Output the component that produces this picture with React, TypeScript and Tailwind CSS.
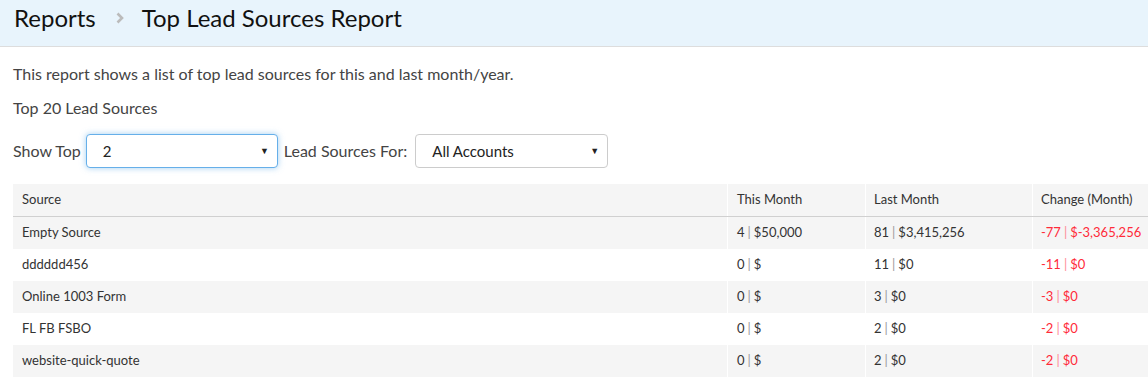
import React from "react";

const rows = [
  { s: "Empty Source", t: "4 | $50,000", l: "81 | $3,415,256", c: "-77 | $-3,365,256" },
  { s: "dddddd456", t: "0 | $", l: "11 | $0", c: "-11 | $0" },
  { s: "Online 1003 Form", t: "0 | $", l: "3 | $0", c: "-3 | $0" },
  { s: "FL FB FSBO", t: "0 | $", l: "2 | $0", c: "-2 | $0" },
  { s: "website-quick-quote", t: "0 | $", l: "2 | $0", c: "-2 | $0" },
];

function Pipe({ v, red }: { v: string; red?: boolean }) {
  const [a, b] = v.split(" | ");
  return (
    <span className={red ? "text-[#ff2b3a]" : "text-[#333]"}>
      {a}
      <span className={red ? "mx-[3px] text-[#ff8a94]" : "mx-[3px] text-[#999]"}>|</span>
      {b}
    </span>
  );
}

function Select({ value, width, focused }: { value: string; width: string; focused?: boolean }) {
  return (
    <div
      className={`${width} h-[34px] shrink-0 flex items-center justify-between rounded-[4px] bg-white pl-[16px] pr-[8px] text-[15px] text-[#222] ${
        focused
          ? "border border-[#66afe9] shadow-[0_0_6px_rgba(102,175,233,0.6)]"
          : "border border-[#ccc]"
      }`}
    >
      <span>{value}</span>
      <span className="text-[9px] text-[#222]">▼</span>
    </div>
  );
}

function Row({
  cells,
  bg,
  header,
}: {
  cells: React.ReactNode[];
  bg: string;
  header?: boolean;
}) {
  return (
    <div className={`flex ${header ? "h-[33px] border-b border-[#d0d0d0]" : "h-[32px]"} ${bg}`}>
      <div className="w-[714px] shrink-0 pl-[9px] flex items-center">{cells[0]}</div>
      <div className="w-[138px] shrink-0 pl-[9px] flex items-center border-l border-white">{cells[1]}</div>
      <div className="w-[167px] shrink-0 pl-[8px] flex items-center border-l border-white">{cells[2]}</div>
      <div className="w-[200px] shrink-0 pl-[8px] flex items-center border-l border-white">{cells[3]}</div>
    </div>
  );
}

export default function App() {
  return (
    <div className="w-[1148px] h-[379px] overflow-hidden bg-white font-['Lato',sans-serif] text-[#333]">
      <div className="h-[47px] bg-[#e8f4fc] border-b border-[#ddd] flex items-start pt-[2px] pl-[14px]">
        <span className="text-[24px] leading-[32px] text-[#111]">Reports</span>
        <span className="ml-[20px] mr-[18px] h-[32px] flex items-center">
          <svg width="8" height="12" viewBox="0 0 8 12">
            <path d="M1.5 1.5 L6 6 L1.5 10.5" fill="none" stroke="#bbbbbb" strokeWidth="2.6" />
          </svg>
        </span>
        <span className="text-[24px] leading-[32px] text-[#111]">Top Lead Sources Report</span>
      </div>
      <div className="pl-[13px]">
        <div className="mt-[17px] text-[16px] leading-[20px] text-[#444]">
          This report shows a list of top lead sources for this and last month/year.
        </div>
        <div className="mt-[14px] text-[16px] leading-[20px] text-[#444]">Top 20 Lead Sources</div>
        <div className="mt-[16px] flex items-center text-[16px] text-[#444]">
          <span className="mr-[5px]">Show Top</span>
          <Select value="2" width="w-[192px]" focused />
          <span className="ml-[6px] mr-[8px]">Lead Sources For:</span>
          <Select value="All Accounts" width="w-[193px]" />
        </div>
        <div className="mt-[16px] w-[1200px] text-[13px] text-[#333]">
          <Row header bg="bg-[#f5f5f5]" cells={["Source", "This Month", "Last Month", "Change (Month)"]} />
          {rows.map((r, i) => (
            <Row
              key={r.s}
              bg={i % 2 === 0 ? "bg-[#f5f5f5]" : "bg-white"}
              cells={[r.s, <Pipe v={r.t} />, <Pipe v={r.l} />, <Pipe v={r.c} red />]}
            />
          ))}
        </div>
      </div>
    </div>
  );
}
